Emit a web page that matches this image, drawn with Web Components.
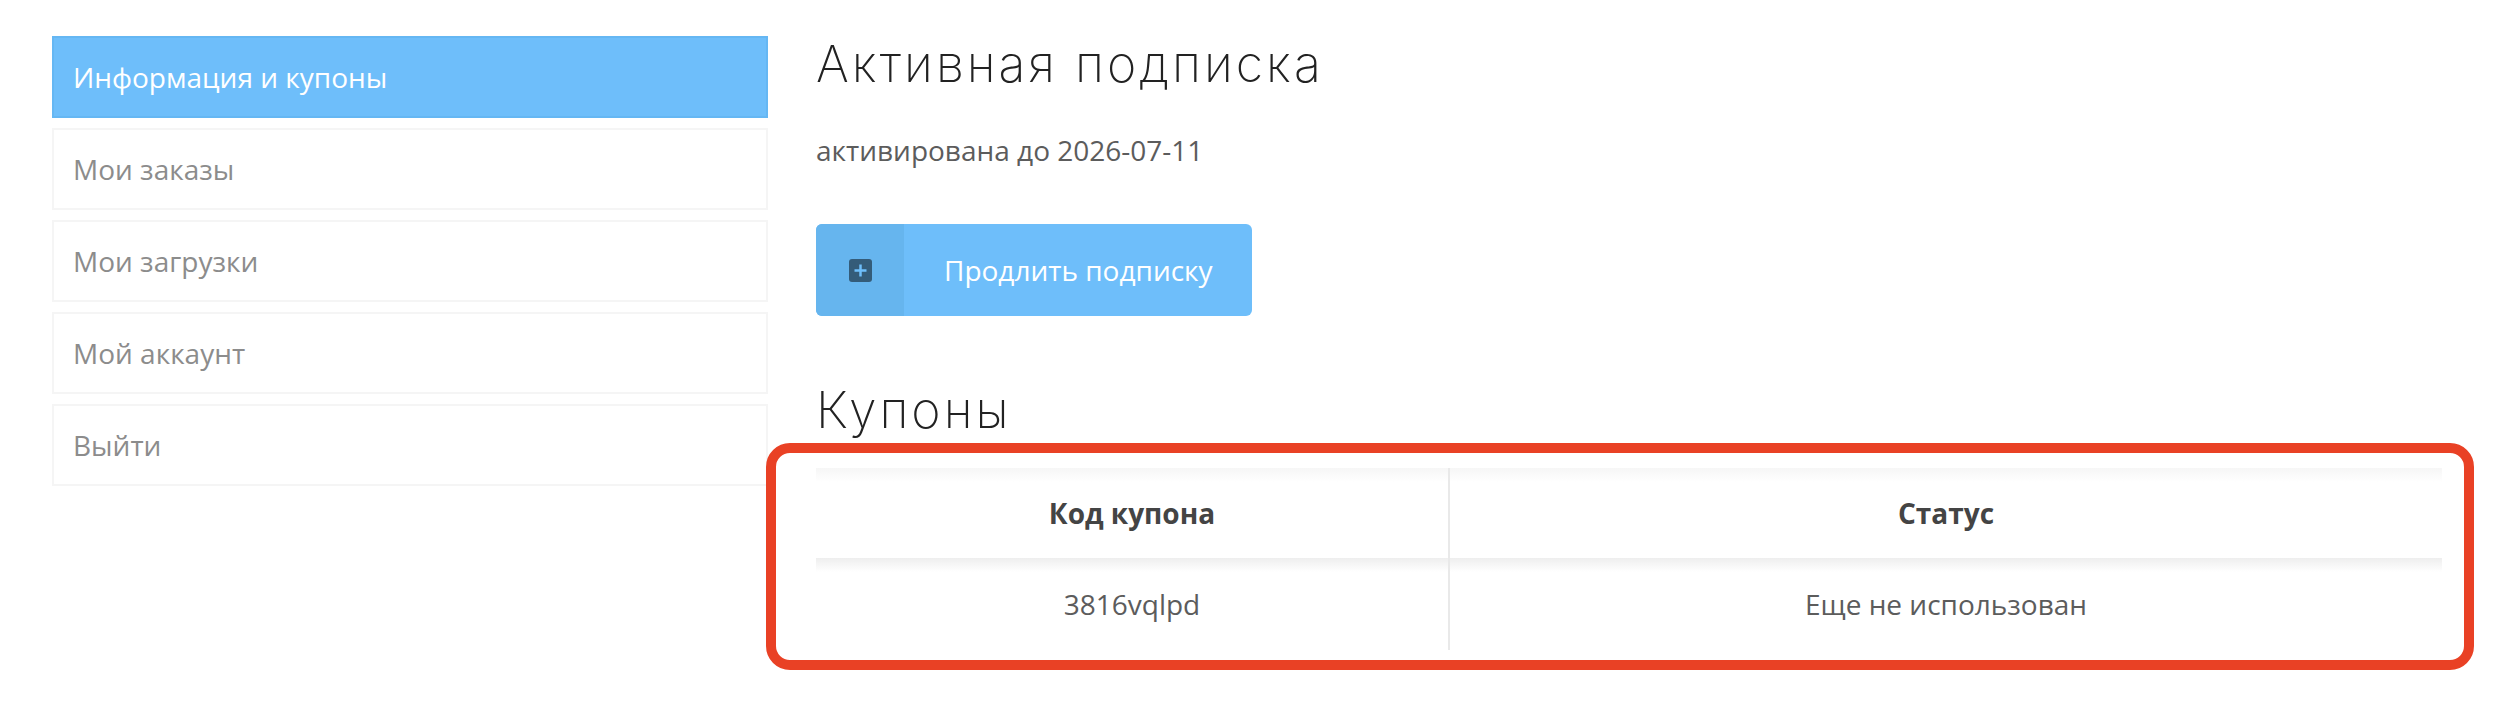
<!DOCTYPE html>
<html lang="ru">
<head>
<meta charset="utf-8">
<title>Личный кабинет</title>
<style>
  html, body { margin: 0; background: #fff; }
  body { font-family: "Open Sans", sans-serif; color: #555; width: 2506px; height: 710px; overflow: hidden; }
</style>
</head>
<body>
<account-page>
  <side-menu slot="menu">
    <menu-item active>Информация и купоны</menu-item>
    <menu-item>Мои заказы</menu-item>
    <menu-item>Мои загрузки</menu-item>
    <menu-item>Мой аккаунт</menu-item>
    <menu-item>Выйти</menu-item>
  </side-menu>
  <section-title slot="content">Активная подписка</section-title>
  <sub-status slot="content">активирована до 2026-07-11</sub-status>
  <icon-button slot="content">Продлить подписку</icon-button>
  <section-title slot="content" class="coupons">Купоны</section-title>
  <coupon-table slot="content" code="3816vqlpd" status="Еще не использован"></coupon-table>
</account-page>

<script>
// Page layout: menu column on the left, content on the right
class AccountPage extends HTMLElement {
  constructor() {
    super();
    this.attachShadow({ mode: "open" });
    this.shadowRoot.innerHTML = `
      <style>
        :host { display: flex; padding: 36px 64px 0 52px; gap: 48px; align-items: flex-start; }
        .menu { width: 716px; flex: none; }
        .content { flex: 1; min-width: 0; display: flex; flex-direction: column; align-items: stretch; }
      </style>
      <div class="menu"><slot name="menu"></slot></div>
      <div class="content"><slot name="content"></slot></div>
    `;
  }
}

class SideMenu extends HTMLElement {
  constructor() {
    super();
    this.attachShadow({ mode: "open" });
    this.shadowRoot.innerHTML = `
      <style>
        :host { display: flex; flex-direction: column; gap: 10px; }
      </style>
      <slot></slot>
    `;
  }
}

class MenuItem extends HTMLElement {
  constructor() {
    super();
    this.attachShadow({ mode: "open" });
    this.shadowRoot.innerHTML = `
      <style>
        :host {
          display: flex;
          align-items: center;
          box-sizing: border-box;
          height: 82px;
          padding-left: 19px;
          border: 2px solid #f5f5f5;
          font-size: 28px;
          color: #8c8c8c;
        }
        :host([active]) {
          background: #6ebefa;
          border-color: #65b7f3;
          color: #fff;
        }
      </style>
      <slot></slot>
    `;
  }
}

class SectionTitle extends HTMLElement {
  constructor() {
    super();
    this.attachShadow({ mode: "open" });
    this.shadowRoot.innerHTML = `
      <style>
        :host {
          display: block;
          font-family: Inter, "Open Sans", sans-serif;
          font-weight: 250;
          font-size: 50px;
          line-height: 60px;
          color: #222;
          letter-spacing: 3px;
          margin-top: -2px;
        }
        :host(.coupons) { margin-top: 64px; }
      </style>
      <slot></slot>
    `;
  }
}

class SubStatus extends HTMLElement {
  constructor() {
    super();
    this.attachShadow({ mode: "open" });
    this.shadowRoot.innerHTML = `
      <style>
        :host { display: block; margin-top: 36px; font-size: 28px; line-height: 40px; color: #5c5c5c; }
      </style>
      <slot></slot>
    `;
  }
}

class IconButton extends HTMLElement {
  constructor() {
    super();
    this.attachShadow({ mode: "open" });
    this.shadowRoot.innerHTML = `
      <style>
        :host {
          display: flex;
          align-self: flex-start;
          width: 436px;
          height: 92px;
          margin-top: 54px;
          background: #6ebefa;
          border-radius: 6px;
          overflow: hidden;
          color: #fff;
          font-size: 28px;
        }
        .icon { width: 88px; flex: none; background: #66b5ee; display: flex; align-items: center; justify-content: center; }
        .label { flex: 1; padding-left: 40px; display: flex; align-items: center; }
      </style>
      <span class="icon">
        <svg width="23" height="23" viewBox="0 0 23 23">
          <rect width="23" height="23" rx="3" fill="#345c79"/>
          <path d="M11.5 5.5v12M5.5 11.5h12" stroke="#6ebefa" stroke-width="2.5"/>
        </svg>
      </span>
      <span class="label"><slot></slot></span>
    `;
  }
}

class CouponTable extends HTMLElement {
  constructor() {
    super();
    this.attachShadow({ mode: "open" });
    const code = this.getAttribute("code");
    const status = this.getAttribute("status");
    this.shadowRoot.innerHTML = `
      <style>
        :host { display: block; position: relative; margin-top: 28px; font-size: 28px; color: #5c5c5c; }
        .grid { display: grid; grid-template-columns: 634px 1fr; }
        .cell { display: flex; align-items: center; justify-content: center; box-sizing: border-box; }
        .head { height: 90px; font-weight: 700; color: #444; background: linear-gradient(#f6f6f6, #fff 14px); }
        .body { height: 92px; background: linear-gradient(#eee, #fff 14px); }
        .sep { border-right: 2px solid #e9e9e9; }
        /* red highlight drawn over the screenshot */
        .mark {
          position: absolute;
          left: -50px; right: -32px; top: -25px; bottom: -20px;
          border: 10px solid #e94125;
          border-radius: 24px;
          pointer-events: none;
        }
      </style>
      <div class="grid">
        <div class="cell head sep">Код купона</div>
        <div class="cell head">Статус</div>
        <div class="cell body sep">${code}</div>
        <div class="cell body">${status}</div>
      </div>
      <div class="mark"></div>
    `;
  }
}

customElements.define("account-page", AccountPage);
customElements.define("side-menu", SideMenu);
customElements.define("menu-item", MenuItem);
customElements.define("section-title", SectionTitle);
customElements.define("sub-status", SubStatus);
customElements.define("icon-button", IconButton);
customElements.define("coupon-table", CouponTable);
</script>
</body>
</html>
